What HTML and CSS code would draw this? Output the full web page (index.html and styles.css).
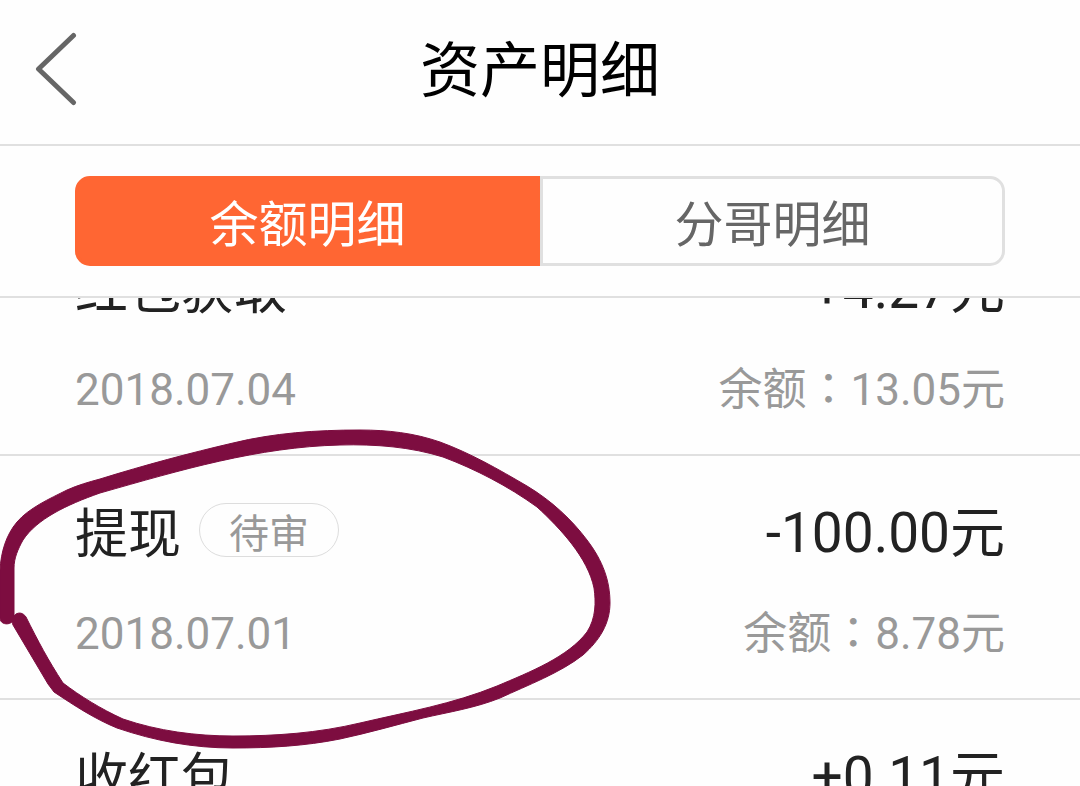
FILE: index.html
```html
<!DOCTYPE html>
<html lang="zh-CN">
<head>
  <meta charset="UTF-8">
  <meta name="viewport" content="width=device-width, initial-scale=1.0">
  <title>资产明细</title>
  <link rel="stylesheet" href="styles.css">
</head>
<body>

  <!-- Header -->
  <header class="header">
    <button type="button" class="back-btn" aria-label="返回">
      <svg width="42" height="74" viewBox="0 0 42 74">
        <path d="M38.500 3.500 L3.500 37 L38.500 70.500"/>
      </svg>
    </button>
    <h1>资产明细</h1>
  </header>

  <!-- Tabs -->
  <nav class="tabs">
    <button type="button" class="tab active">余额明细</button>
    <button type="button" class="tab">分哥明细</button>
  </nav>

  <!-- Records -->
  <main class="records">
    <ul class="record-list">
      <li class="record">
        <div class="line">
          <div class="name"><span class="type">红包获取</span></div>
          <span class="amount">+4.27元</span>
        </div>
        <div class="line meta">
          <span>2018.07.04</span>
          <span>余额<span class="colon" lang="zh-TW">：</span>13.05元</span>
        </div>
      </li>
      <li class="record">
        <div class="line">
          <div class="name"><span class="type">提现</span><span class="status">待审</span></div>
          <span class="amount">-100.00元</span>
        </div>
        <div class="line meta">
          <span>2018.07.01</span>
          <span>余额<span class="colon" lang="zh-TW">：</span>8.78元</span>
        </div>
      </li>
      <li class="record">
        <div class="line">
          <div class="name"><span class="type">收红包</span></div>
          <span class="amount">+0.11元</span>
        </div>
      </li>
    </ul>
  </main>

  <!-- Hand-drawn circle around the withdrawal -->
  <svg class="marker" width="620" height="760" viewBox="0 0 620 760" aria-hidden="true">
    <path d="M0 618 L0 570 C1 552 6 535 17 522 C29 508 49 499 67 490 C78 485 89 482 100 479
      C145 465 190 453 233 443
      C274 433 316 430 360 430 C388 430 414 433 440 442 C470 453 498 469 527 486
      C552 501 572 520 587 540 C603 561 610 581 610 603 C610 623 600 640 583 655
      C560 673 528 685 500 698 C475 708 449 712 423 718 C396 725 368 733 340 739
      C305 746 270 748 233 748 C193 748 155 741 117 728 C95 719 75 706 54 692
      L48 684 L13 625 C9 616 20 608 26 617 C38 641 48 660 63 683 C80 696 101 709 123 719
      C158 731 196 736 233 736 C276 736 318 733 360 723 C407 712 453 704 497 686
      C530 672 568 657 587 632 C596 618 596 602 594 588 C588 558 560 528 537 507
      C508 486 475 469 443 457 C411 447 376 444 340 445 C258 447 181 470 100 493
      C66 505 37 519 23 540 C18 549 14 558 14 568 L14 617 C14 626 0 626 0 618 Z"/>
  </svg>

</body>
</html>
```
FILE: styles.css
```css
* {
  box-sizing: border-box;
}
body {
  display: flex;
  flex-direction: column;
  height: 100vh;
  margin: 0;
  overflow: hidden;
  background-color: #fefefe;
  color: #222;
  font-family: Roboto, "Noto Sans CJK SC", sans-serif;
}
button {
  padding: 0;
  border: none;
  background: none;
  font-family: inherit;
  cursor: pointer;
}

/* Header */
.header {
  display: grid;
  grid-template-columns: 80px 1fr 80px;
  align-items: center;
  flex-shrink: 0;
  height: 146px;
  padding-bottom: 6px;
  border-bottom: 2px solid #e0e0e0;
}
.back-btn {
  display: flex;
  justify-content: flex-end;
  padding-right: 3px;
}
.back-btn path {
  fill: none;
  stroke: #666;
  stroke-width: 5;
  stroke-linecap: round;
  stroke-linejoin: round;
}
h1 {
  margin: 0;
  padding-top: 6px;
  color: #000;
  font-size: 60px;
  font-weight: 400;
  line-height: 80px;
  text-align: center;
}

/* Tabs */
.tabs {
  display: flex;
  flex-shrink: 0;
  padding: 30px 75px;
  border-bottom: 2px solid #e0e0e0;
}
.tab {
  flex: 1;
  height: 90px;
  padding-top: 10px;
  border: 3px solid #e0e0e0;
  border-radius: 0 15px 15px 0;
  color: #666;
  font-size: 49px;
  line-height: 64px;
}
.tab.active {
  border-color: #ff6633;
  border-radius: 15px 0 0 15px;
  background-color: #ff6633;
  color: #fff;
}

/* Records */
.records {
  flex: 1;
  min-height: 0;
  overflow: hidden;
}
.record-list {
  margin: -86px 0 0; /* scrolled part of the list */
  padding: 0;
  list-style: none;
}
.record {
  padding: 44px 75px 36px;
  border-bottom: 2px solid #e0e0e0;
}
.line {
  display: flex;
  align-items: center;
  justify-content: space-between;
  height: 64px;
  line-height: 64px;
}
.name {
  display: flex;
  align-items: center;
  gap: 18px;
}
.type {
  padding-top: 6px;
  font-size: 53px;
}
.amount {
  padding-top: 2px;
  font-size: 55px;
}
.meta {
  align-items: baseline;
  margin-top: 34px;
  color: #999;
  font-size: 44px;
}
.colon {
  font-family: "Noto Sans CJK TC", sans-serif;
}
.status {
  height: 54px;
  margin-bottom: 4px;
  padding: 6px 29px 0;
  border: 1px solid #ddd;
  border-radius: 27px;
  color: #999;
  font-size: 40px;
  line-height: 50px;
}

/* Marker circle */
.marker {
  position: absolute;
  top: 0;
  left: 0;
  fill: #7d0d40;
  stroke: #7d0d40;
  stroke-width: 1;
  pointer-events: none;
}
```
